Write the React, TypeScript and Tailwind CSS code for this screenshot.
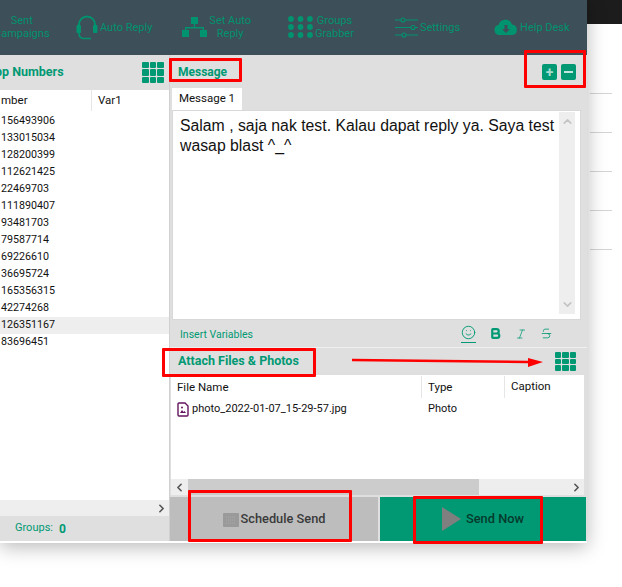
import { Bold, Italic, Smile, Strikethrough, ChevronLeft, ChevronRight, ChevronUp, ChevronDown } from "lucide-react";

const numbers = [
  "156493906", "133015034", "128200399", "112621425", "22469703", "111890407", "93481703",
  "79587714", "69226610", "36695724", "165356315", "42274268", "126351167", "83696451",
];

const GridIcon = ({ className }: { className?: string }) => (
  <div className={`grid grid-cols-3 gap-[1px] ${className ?? ""}`}>
    {Array.from({ length: 9 }).map((_, i) => (
      <span key={i} className="rounded-[1px] bg-[#009973]" />
    ))}
  </div>
);

const HeadsetIcon = () => (
  <svg width="22" height="25" viewBox="0 0 22 25" fill="none" className="shrink-0">
    <path d="M3 12V9.500a8 8 0 0 1 16 0V12" stroke="#00936f" strokeWidth="2" />
    <rect x="0.500" y="10" width="4.500" height="8" rx="1" fill="#00936f" />
    <rect x="17" y="10" width="4.500" height="8" rx="1" fill="#00936f" />
    <path d="M3 18c0 3.500 2 5.500 5 5.500h7" stroke="#00936f" strokeWidth="1.600" />
  </svg>
);

const SitemapIcon = () => (
  <svg width="25" height="20" viewBox="0 0 25 20" fill="#00936f" className="shrink-0">
    <rect x="9" y="0" width="7" height="7" />
    <rect x="0" y="13" width="7" height="7" />
    <rect x="18" y="13" width="7" height="7" />
    <path d="M11.800 7h1.400v3H22v3h-1.400v-1.600H4.400V13H3v-3h8.800z" />
  </svg>
);

const DotsIcon = () => (
  <svg width="25" height="22" viewBox="0 0 25 22" fill="#00936f" className="shrink-0">
    {[3, 12.500, 22].map((x) => [3, 11, 19].map((y) => <circle key={`${x}-${y}`} cx={x} cy={y} r="2.900" />))}
  </svg>
);

const SlidersIcon = () => (
  <svg width="23" height="21" viewBox="0 0 23 21" fill="none" stroke="#00936f" strokeWidth="1.100" className="shrink-0">
    <path d="M0 3h6M10 3h13M0 10.500h16M20 10.500h3M0 18h7M11 18h12" />
    <circle cx="8" cy="3" r="2" />
    <circle cx="18" cy="10.500" r="2" />
    <circle cx="9" cy="18" r="2" />
  </svg>
);

const CloudIcon = () => (
  <svg width="24" height="16" viewBox="0 0 24 16" className="shrink-0">
    <path d="M5.500 16a5 5 0 0 1-1-9.900A7 7 0 0 1 18 5.500 5.300 5.300 0 0 1 18.500 16z" fill="#00936f" />
    <path d="M10.500 6h3v4H16l-4 4-4-4h2.500z" fill="#3d4f58" />
  </svg>
);

const Tool = ({ icon, lines, className }: { icon?: React.ReactNode; lines: string[]; className: string }) => (
  <div className={`flex shrink-0 items-center ${className}`}>
    {icon}
    <div className="ml-[2px] whitespace-nowrap text-center text-[11px] leading-[13px] text-[#00936f]">
      {lines.map((line) => (
        <div key={line}>{line}</div>
      ))}
    </div>
  </div>
);

const RedBox = ({ className }: { className: string }) => (
  <div className={`pointer-events-none absolute rounded-[1px] border-[3px] border-[#fe0000] ${className}`} />
);

export default function App() {
  return (
    <div className="relative h-[587px] w-[622px] overflow-hidden bg-white font-['Roboto',sans-serif] text-[#111]">
      {/* page behind the window */}
      <div className="absolute right-0 top-0 h-[24px] w-[40px] bg-[#1c1c1c]" />
      <div className="absolute left-[590px] top-[93px] flex w-[22px] flex-col gap-[38px]">
        {[0, 1, 2, 3, 4].map((i) => (
          <div key={i} className="h-px bg-[#d4d4d4]" />
        ))}
      </div>

      <div className="relative flex h-[543px] w-[587px] flex-col overflow-hidden bg-white pb-[2px] shadow-[0_4px_18px_rgba(0,0,0,0.28)]">
        <header className="flex h-[55px] shrink-0 items-center bg-[#3d4f58] pb-[1px]">
          <Tool lines={["Sent", "Campaigns"]} className="ml-[-8px] w-[52px]" />
          <Tool icon={<HeadsetIcon />} lines={["Auto Reply"]} className="ml-[32px]" />
          <Tool icon={<SitemapIcon />} lines={["Set Auto", "Reply"]} className="ml-[30px]" />
          <Tool icon={<DotsIcon />} lines={["Groups", "Grabber"]} className="ml-[37px]" />
          <Tool icon={<SlidersIcon />} lines={["Settings"]} className="ml-[41px]" />
          <Tool icon={<CloudIcon />} lines={["Help Desk"]} className="ml-[34px]" />
        </header>

        <div className="flex min-h-0 flex-1 bg-[#dfdfdf]">
          {/* numbers panel */}
          <aside className="flex w-[170px] shrink-0 flex-col border-r border-[#d0d0d0]">
            <div className="flex h-[35px] shrink-0 items-center justify-between pr-[5px]">
              <span className="ml-[-5px] text-[12.500px] font-bold text-[#009973]">pp Numbers</span>
              <GridIcon className="h-[21px] w-[22px]" />
            </div>
            <div className="flex min-h-0 flex-1 flex-col bg-white">
              <div className="flex h-[21px] shrink-0 items-center text-[11.500px]">
                <div className="flex h-full w-[92px] items-center border-r border-[#e6e6e6] pl-[1px]">mber</div>
                <div className="pl-[6px]">Var1</div>
              </div>
              <div className="min-h-0 flex-1 pt-[2px]">
                {numbers.map((n) => (
                  <div
                    key={n}
                    className={`flex h-[17px] items-center pl-[1px] text-[10.700px] ${n === "126351167" ? "bg-[#eeeeee]" : ""}`}
                  >
                    {n}
                  </div>
                ))}
              </div>
              <div className="flex h-[16px] shrink-0 items-center justify-end bg-[#eeeeee] pr-[1px]">
                <ChevronRight size={13} strokeWidth={3} className="text-[#555]" />
              </div>
            </div>
            <div className="flex h-[25px] shrink-0 items-center gap-[6px] pl-[15px]">
              <span className="text-[11px] text-[#009973]">Groups:</span>
              <span className="text-[12px] font-bold text-[#009973]">0</span>
            </div>
          </aside>

          {/* message panel */}
          <main className="flex min-w-0 flex-1 flex-col">
            <div className="flex h-[33px] shrink-0 items-center justify-between pl-[8px] pr-[11px]">
              <span className="text-[12px] font-bold text-[#009973]">Message</span>
              <div className="flex gap-[4px]">
                <div className="flex h-[16px] w-[15px] items-center justify-center rounded-[2px] bg-[#009973] text-[14px] font-bold leading-none text-[#a9dccf]">+</div>
                <div className="flex h-[16px] w-[15px] items-center justify-center rounded-[2px] bg-[#009973]">
                  <span className="h-[2px] w-[9px] bg-[#c5e6dd]" />
                </div>
              </div>
            </div>
            <div className="flex h-[22px] shrink-0 pl-[2px]">
              <div className="flex w-[70px] items-center justify-center bg-white text-[11.500px]">Message 1</div>
            </div>
            <div className="mx-[2px] mr-[6px] flex h-[210px] shrink-0 border border-[#d8d8d8] bg-white py-[1px] pl-[7px] pr-[5px]">
              <p className="min-w-0 flex-1 pt-[4px] font-['Liberation_Sans',sans-serif] text-[15.800px] leading-[20px] text-[#111]">
                Salam , saja nak test. Kalau dapat reply ya. Saya test wasap blast ^_^
              </p>
              <div className="flex h-[202px] w-[16px] shrink-0 flex-col items-center justify-between bg-[#eeeeee] py-[3px] text-[#c4c4c4]">
                <ChevronUp size={13} strokeWidth={3} />
                <ChevronDown size={13} strokeWidth={3} />
              </div>
            </div>
            <div className="flex h-[27px] shrink-0 items-center justify-between pl-[10px] pr-[34px]">
              <span className="mt-[2px] text-[10.500px] text-[#009973]">Insert Variables</span>
              <div className="flex items-center gap-[13px] text-[#009973]">
                <Smile size={15} strokeWidth={1.500} className="box-content border-b border-[#009973] pb-[2px]" />
                <Bold size={13} strokeWidth={4} />
                <Italic size={12} strokeWidth={1.500} />
                <Strikethrough size={13} strokeWidth={1.500} />
              </div>
            </div>
            <div className="flex h-[28px] shrink-0 items-center justify-between border-t border-[#f0f0f0] pl-[8px] pr-[11px]">
              <span className="text-[12.500px] font-bold text-[#009973]">Attach Files &amp; Photos</span>
              <GridIcon className="h-[19px] w-[21px]" />
            </div>
            <div className="mx-[1px] mr-[3px] flex h-[120px] shrink-0 flex-col bg-white">
              <div className="flex h-[24px] shrink-0 items-center text-[11.500px]">
                <div className="flex h-[22px] w-[251px] items-center border-r border-[#e6e6e6] pl-[6px] pt-[2px]">File Name</div>
                <div className="flex h-[22px] w-[83px] items-center border-r border-[#e6e6e6] pl-[6px] pt-[2px]">Type</div>
                <div className="pl-[6px]">Caption</div>
              </div>
              <div className="flex h-[21px] shrink-0 items-center text-[11px]">
                <div className="flex w-[251px] items-center gap-[3px] pl-[6px]">
                  <svg width="12" height="15" viewBox="0 0 12 15" fill="none" className="shrink-0">
                    <path d="M1 2a1 1 0 0 1 1-1h6l3 3v9a1 1 0 0 1-1 1H2a1 1 0 0 1-1-1z" stroke="#64145f" strokeWidth="1.400" />
                    <path d="M3 11l2-3 1.500 2 1-1 1.500 2z" fill="#64145f" />
                    <circle cx="5" cy="5.500" r="1" fill="#64145f" />
                  </svg>
                  <span>photo_2022-01-07_15-29-57.jpg</span>
                </div>
                <div className="pl-[6px]">Photo</div>
              </div>
              <div className="flex-1" />
              <div className="flex h-[16px] shrink-0 items-center bg-[#eeeeee] text-[#555]">
                <div className="flex w-[17px] justify-center">
                  <ChevronLeft size={13} strokeWidth={3} />
                </div>
                <div className="h-full w-[291px] bg-[#cccccc]" />
                <div className="flex flex-1 justify-end pr-[1px]">
                  <ChevronRight size={13} strokeWidth={3} />
                </div>
              </div>
            </div>
            <div className="mt-[2px] flex h-[44px] shrink-0 gap-[2px] pr-[1px]">
              <div className="flex w-[208px] items-center justify-center gap-[2px] bg-[#bdbdbd] text-[12.800px] font-medium text-[#3a3a3a]">
                <svg width="16" height="15" viewBox="0 0 16 15" className="shrink-0">
                  <rect width="16" height="14" y="1" rx="1" fill="#9a9a9a" />
                  <path d="M3 5h10M3 8h10M3 11h10" stroke="#a9a9a9" strokeWidth="1" strokeDasharray="1 1" />
                </svg>
                Schedule Send
              </div>
              <div className="flex flex-1 items-center justify-center gap-[5px] bg-[#009973] text-[12.800px] font-medium text-[#063a2d]">
                <svg width="19" height="24" viewBox="0 0 19 24" className="shrink-0">
                  <path d="M0 0l19 12L0 24z" fill="#7f7f7f" />
                </svg>
                Send Now
              </div>
            </div>
          </main>
        </div>
      </div>

      {/* annotations drawn over the screenshot */}
      <RedBox className="left-[169px] top-[58px] h-[24px] w-[73px]" />
      <RedBox className="left-[524px] top-[50px] h-[38px] w-[62px]" />
      <RedBox className="left-[162px] top-[348px] h-[29px] w-[154px]" />
      <RedBox className="left-[188px] top-[490px] h-[52px] w-[164px]" />
      <RedBox className="left-[413px] top-[496px] h-[48px] w-[130px]" />
      <svg width="200" height="14" viewBox="0 0 200 14" className="absolute left-[350px] top-[354px]">
        <path d="M2 6L178 8" stroke="#fe0000" strokeWidth="2.500" />
        <path d="M178 4L193 8L178 13z" fill="#fe0000" />
      </svg>
    </div>
  );
}
